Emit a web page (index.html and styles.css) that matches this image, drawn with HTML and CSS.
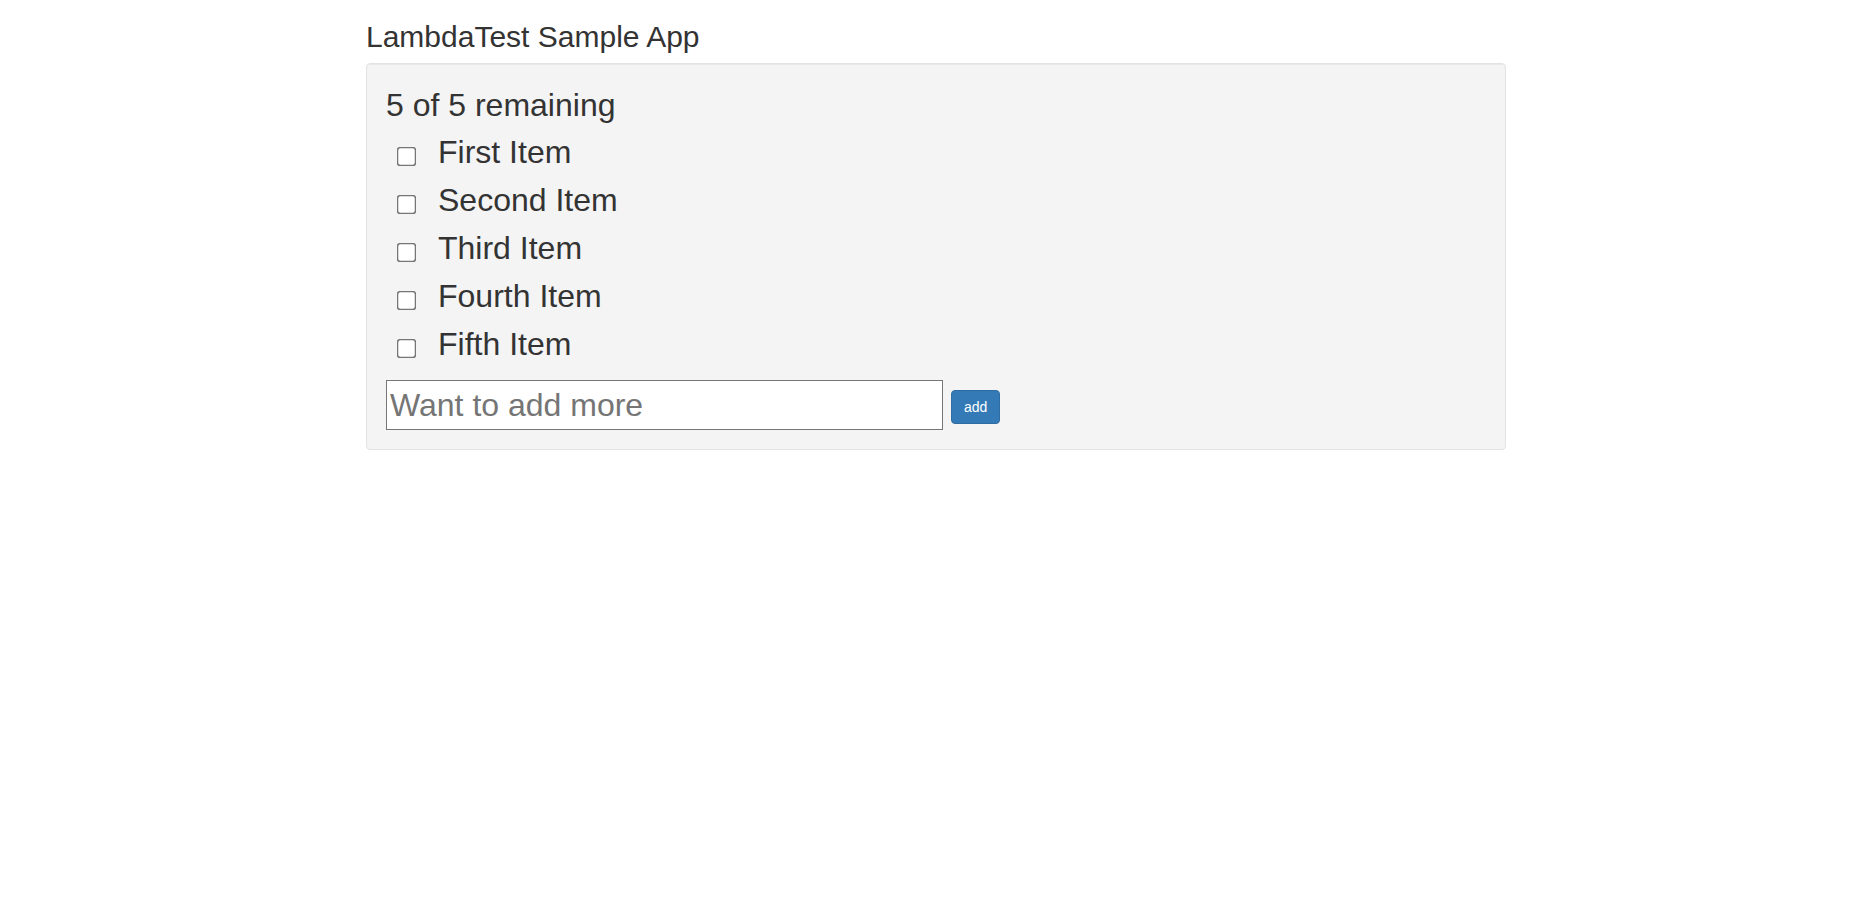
FILE: index.html
```html
<!DOCTYPE html>
<html lang="en">
<head>
<meta charset="utf-8">
<title>LambdaTest Sample App</title>
<link rel="stylesheet" href="styles.css">
</head>
<body>
<div class="container">
  <h2 class="title">LambdaTest Sample App</h2>
  <div class="well">
    <span class="remaining">5 of 5 remaining</span>
    <ul class="todo-list">
      <li class="todo-item"><input type="checkbox" class="todo-check"><span class="todo-text">First Item</span></li>
      <li class="todo-item"><input type="checkbox" class="todo-check"><span class="todo-text">Second Item</span></li>
      <li class="todo-item"><input type="checkbox" class="todo-check"><span class="todo-text">Third Item</span></li>
      <li class="todo-item"><input type="checkbox" class="todo-check"><span class="todo-text">Fourth Item</span></li>
      <li class="todo-item"><input type="checkbox" class="todo-check"><span class="todo-text">Fifth Item</span></li>
    </ul>
    <form class="add-form" onsubmit="return false;">
      <input type="text" class="add-input" placeholder="Want to add more">
      <input type="submit" class="add-btn" value="add">
    </form>
  </div>
</div>
</body>
</html>
```

FILE: styles.css
```css
html, body {
  margin: 0;
  padding: 0;
  background: #fff;
}
body {
  font-family: "Liberation Sans", Arial, Helvetica, sans-serif;
  font-size: 14px;
  line-height: 1.42857143;
  color: #333;
}
.container {
  width: 1170px;
  margin: 0 auto;
  padding: 0 15px;
  box-sizing: border-box;
}
.title {
  font-size: 30px;
  font-weight: 500;
  line-height: 33px;
  margin: 20px 0 10px;
}
.well {
  background: #f4f4f4;
  border: 1px solid #e3e3e3;
  border-radius: 4px;
  box-shadow: inset 0 1px 1px rgba(0, 0, 0, 0.05);
  padding: 19px;
  margin-bottom: 20px;
}
.remaining {
  display: block;
  font-size: 32px;
  line-height: 45px;
  height: 45px;
}
.todo-list {
  list-style: none;
  margin: 0 0 12px;
  padding: 0;
}
.todo-item {
  font-size: 32px;
  line-height: 48px;
  height: 48px;
}
.todo-check {
  margin: 0 0 0 14px;
  width: 13px;
  height: 13px;
  transform: scale(1.5);
  vertical-align: baseline;
}
.todo-text {
  margin-left: 25px;
}
.add-form {
  display: flex;
  align-items: center;
  gap: 8px;
  margin: 0;
}
.add-input {
  box-sizing: border-box;
  width: 557px;
  height: 50px;
  margin: 0;
  padding: 0 3px;
  border: 1px solid #767676;
  border-radius: 0;
  background: #fff;
  font-family: "Liberation Sans", Arial, sans-serif;
  font-size: 32px;
  color: #333;
}
.add-input::placeholder {
  color: #757575;
}
.add-btn {
  box-sizing: border-box;
  margin: 3px 0 0;
  padding: 6px 12px;
  border: 1px solid #2e6da4;
  border-radius: 4px;
  background: #337ab7;
  color: #fff;
  font-family: "Liberation Sans", Arial, sans-serif;
  font-size: 14px;
  line-height: 20px;
  height: 34px;
}
```
